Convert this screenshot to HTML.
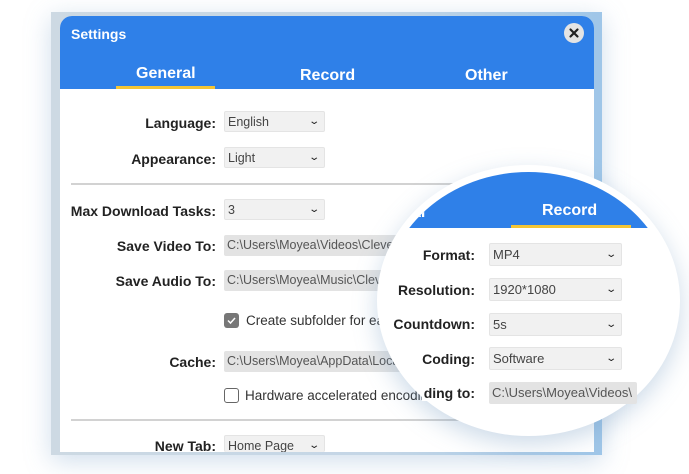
<!DOCTYPE html>
<html><head><meta charset="utf-8"><style>
*{margin:0;padding:0;box-sizing:border-box}
body{width:689px;height:474px;background:#fff;position:relative;overflow:hidden;font-family:"Segoe UI","Liberation Sans","DejaVu Sans",sans-serif;color:#222}
.back{position:absolute;left:51px;top:12px;width:551px;height:443px;background:linear-gradient(90deg,#cdd9e3,#c4d6e6 60%,#9fc6e8);box-shadow:0 6px 24px rgba(120,160,200,.35)}
.win{position:absolute;left:60px;top:16px;width:534px;height:436px;background:#fff;border-radius:12px 12px 0 0;overflow:hidden}
.hdr{position:absolute;left:0;top:0;width:534px;height:73px;background:#2f80e8}
.title{position:absolute;left:11px;top:10px;color:#fff;font-weight:bold;font-size:14px}
.close{position:absolute;left:504px;top:7px;width:20px;height:20px;border-radius:50%;background:#e4e4e4}
.tab{position:absolute;color:#fff;font-weight:bold;font-size:16px}
.ul{position:absolute;height:3px;background:#f4c534}
.lbl{position:absolute;font-weight:bold;font-size:14px;text-align:right;white-space:nowrap}
.sel{position:absolute;height:21px;background:#f1f1f1;border:1px solid #e4e4e4;border-radius:2px;font-size:12.5px;color:#444;padding-left:3px;line-height:20px;white-space:nowrap;overflow:hidden}
.sel .ar{position:absolute;right:6px;top:0;font-size:10px;transform:scaleX(1.4);color:#222}
.path{position:absolute;height:21px;background:#e3e3e3;font-size:12.5px;color:#555;padding-left:3px;line-height:21px;white-space:nowrap;overflow:hidden;border-radius:2px}
.hr{position:absolute;height:2px;background:#d2d2d2}
.cb{position:absolute;width:15px;height:15px;border-radius:3px}
.txt{position:absolute;font-size:13.5px;color:#333;white-space:nowrap}
.circ{position:absolute;left:377px;top:165px;width:303px;height:271px;border-radius:50%;background:#fff;box-shadow:0 8px 24px rgba(110,150,190,.35);overflow:hidden}
.inner{position:absolute;left:7px;top:7px;width:289px;height:257px;border-radius:50%;overflow:hidden;background:#fff}
</style></head><body>
<div class="back"></div>
<div class="win">
 <div class="hdr">
  <div class="title">Settings</div>
  <div class="close"><svg width="20" height="20"><path d="M6.5 6.5l7 7M13.5 6.5l-7 7" stroke="#222" stroke-width="2.2" stroke-linecap="round"/></svg></div>
  <div class="tab" style="left:76px;top:49px">General</div>
  <div class="tab" style="left:240px;top:51px">Record</div>
  <div class="tab" style="left:405px;top:51px">Other</div>
  <div class="ul" style="left:56px;top:70px;width:99px"></div>
 </div>
</div>
<div class="lbl" style="right:473px;top:115px">Language:</div>
<div class="sel" style="left:224px;top:111px;width:101px">English<span class="ar">⌄</span></div>
<div class="lbl" style="right:473px;top:151px">Appearance:</div>
<div class="sel" style="left:224px;top:147px;width:101px">Light<span class="ar">⌄</span></div>
<div class="hr" style="left:71px;top:183px;width:520px"></div>
<div class="lbl" style="right:473px;top:203px">Max Download Tasks:</div>
<div class="sel" style="left:224px;top:199px;width:101px">3<span class="ar">⌄</span></div>
<div class="lbl" style="right:473px;top:238px">Save Video To:</div>
<div class="path" style="left:224px;top:235px;width:200px">C:\Users\Moyea\Videos\CleverGet</div>
<div class="lbl" style="right:473px;top:273px">Save Audio To:</div>
<div class="path" style="left:224px;top:270px;width:200px">C:\Users\Moyea\Music\CleverGet</div>
<div class="cb" style="left:224px;top:313px;background:#777"><svg width="15" height="15"><path d="M4 7.5l2.5 2.5 4.5-5" stroke="#fff" stroke-width="1.5" fill="none"/></svg></div>
<div class="txt" style="left:246px;top:313px">Create subfolder for each</div>
<div class="lbl" style="right:473px;top:354px">Cache:</div>
<div class="path" style="left:224px;top:351px;width:200px">C:\Users\Moyea\AppData\Local</div>
<div class="cb" style="left:224px;top:388px;border:1.5px solid #666;background:#fff"></div>
<div class="txt" style="left:245px;top:388px">Hardware accelerated encoding</div>
<div class="hr" style="left:71px;top:419px;width:520px"></div>
<div class="lbl" style="right:473px;top:438px">New Tab:</div>
<div class="sel" style="left:224px;top:435px;width:101px;height:17px;border-bottom:none">Home Page<span class="ar">⌄</span></div>

<div class="circ"><div class="inner">
 <div style="position:absolute;left:0;top:0;width:289px;height:56px;background:#2f80e8"></div>
 <div style="position:absolute;left:28px;top:32px;color:#fff;font-weight:bold;font-size:16px">al</div>
 <div style="position:absolute;left:158px;top:30px;color:#fff;font-weight:bold;font-size:16px">Record</div>
 <div class="ul" style="left:127px;top:53px;width:120px"></div>
</div></div>
<div class="lbl" style="right:214px;top:247px">Format:</div>
<div class="sel" style="left:489px;top:243px;width:133px;height:23px;line-height:22px;font-size:13px">MP4<span class="ar">⌄</span></div>
<div class="lbl" style="right:214px;top:282px">Resolution:</div>
<div class="sel" style="left:489px;top:278px;width:133px;height:23px;line-height:22px;font-size:13px">1920*1080<span class="ar">⌄</span></div>
<div class="lbl" style="right:214px;top:316px">Countdown:</div>
<div class="sel" style="left:489px;top:313px;width:133px;height:23px;line-height:22px;font-size:13px">5s<span class="ar">⌄</span></div>
<div class="lbl" style="right:214px;top:351px">Coding:</div>
<div class="sel" style="left:489px;top:347px;width:133px;height:23px;line-height:22px;font-size:13px">Software<span class="ar">⌄</span></div>
<div class="lbl" style="right:214px;top:385px;background:#fff;padding-left:2px">ding to:</div>
<div class="path" style="left:489px;top:382px;width:148px;height:22px;font-size:13px">C:\Users\Moyea\Videos\</div>
</body></html>
